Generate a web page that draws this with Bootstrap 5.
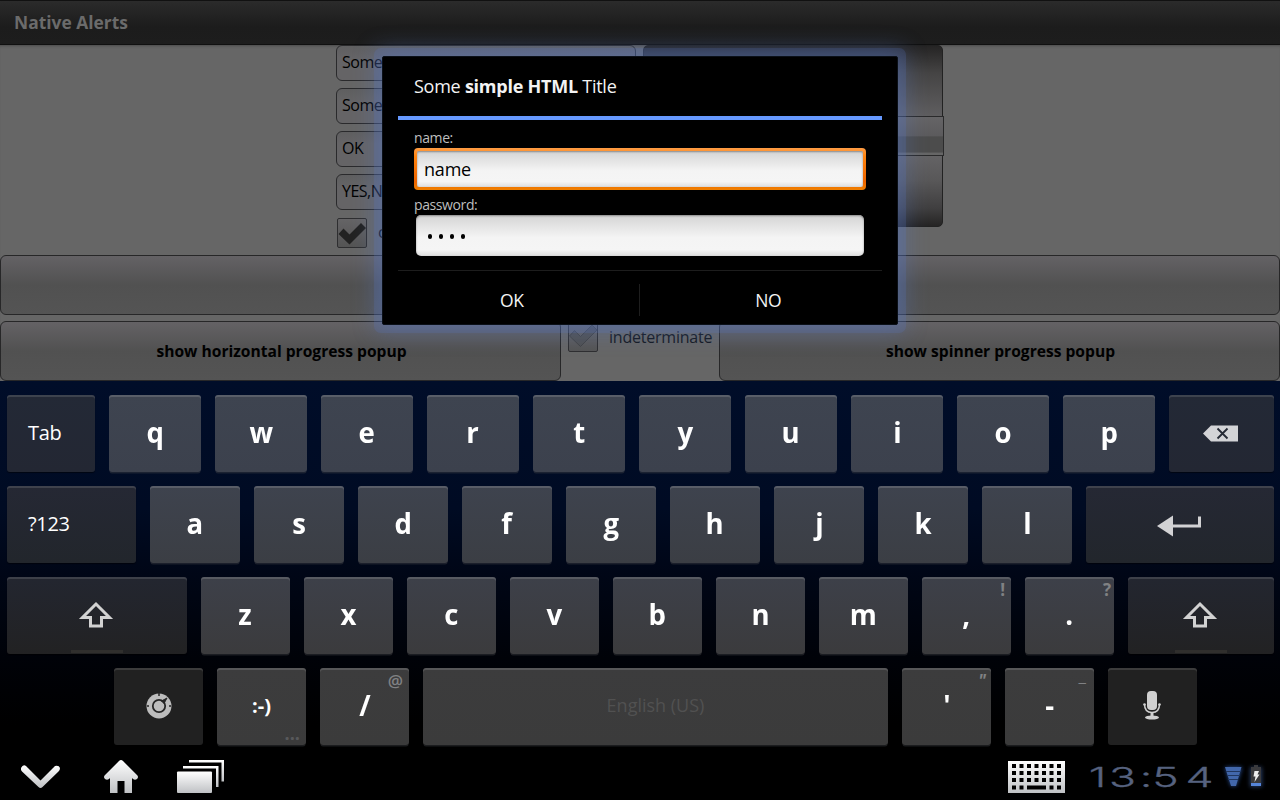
<!DOCTYPE html>
<html lang="en">
<head>
<meta charset="utf-8">
<meta name="viewport" content="width=device-width, initial-scale=1">
<title>Native Alerts</title>
<link rel="stylesheet" href="https://cdn.jsdelivr.net/npm/bootstrap@5.3.0/dist/css/bootstrap.min.css">
<style>
body{width:1280px;height:800px;overflow:hidden;background:#000;font-family:"Open Sans","Noto Sans",sans-serif;font-size:16px;line-height:1.2;color:#000}
svg{display:block;overflow:visible}

/* application behind the dialog */
.titlebar{height:45px;padding:0 14px 1px;background:linear-gradient(#2b2b2b,#1c1c1c 60%,#1d1d1d);border-top:1px solid #111;border-bottom:1px solid #101010;color:#6b6b6b;font-size:17.4px;font-weight:700}
.app-body{height:336px;background:#666;box-shadow:inset 0 3px 3px -2px #4a4a4a}
.form-cols{width:608px;margin-left:336px;gap:7px;height:210px}
.fields{width:300px;gap:7px}
.field{height:36px;border:1.5px solid #2a2a2c;border-radius:6px;padding:0 5px;background:linear-gradient(#5f5f60,#656466 35%,#656466);letter-spacing:-.5px}
.wheel{width:300px;height:182px;border:1px solid #222;border-radius:5px;background:linear-gradient(#252424,#454444 15%,#605f61 40%,#656466 60%,#585758 75%,#403f40 90%,#252424);padding-top:70px}
.wheel-band{height:40px;width:300px;border:1px solid #2a2a2b;background:linear-gradient(#656466 0,#5c5b5d 50%,#4c4c4c 52%,#4c4c4c 93%,#666 94%)}
.tick{width:30px;height:30px;margin-left:1px;border:1px solid #2e2e30;border-radius:2px;background:linear-gradient(#656466,#545454)}
.check-row{padding-top:1px}
.check-row span{padding-left:3px}
.big-btn{height:60px;border:1px solid #272728;border-radius:6px;background:linear-gradient(#646265,#515151 50%,#545454);font-size:15.6px;font-weight:700}
.lower{margin-top:6px}
.half{width:561px;padding-left:2px}
.mid{width:158px;padding:1px 0 0 6px}
.ind{margin-left:11px;margin-top:6px;color:#141820;letter-spacing:-.22px;white-space:nowrap}

/* dialog */
.dialog{left:382px;top:56px;width:516px;height:269px;background:#000;border:1px solid #0b1018;border-radius:2px;box-shadow:0 0 0 8px rgba(88,122,200,.2),0 0 22px 7px rgba(84,118,200,.36);padding:0 15px;color:#f3f3f3}
.dlg-title{height:63px;border-bottom:4px solid #69f;padding-left:16px;font-size:18px;letter-spacing:-.25px}
.dlg-main{height:150px;padding-top:10px}
.cap{font-size:14px;letter-spacing:-.4px;color:#bebebe;line-height:16px}
.edit{border-radius:5px;background:linear-gradient(#d4d4d4,#f4f4f4 55%,#f5f5f5 85%,#ddd);color:#000;font-size:18px;letter-spacing:-.2px;box-shadow:inset 0 1px 2px #888}
.focused{height:42px;width:452px;margin:2px 0 7px;padding:3px;border-radius:4px;background:linear-gradient(#ff9d45,#ff8410 20%,#ec6400 80%,#f08000)}
.focused .edit{border-radius:2px;padding:2px 0 0 7px}
.pass{margin:2px 2px 0;height:41px;padding:2px 0 0 12px;gap:7px}
.dot{width:4px;height:5px;border-radius:2px;background:#000}
.dlg-foot{border-top:1px solid #1d1d1d;height:53px;font-size:17.5px;letter-spacing:-.4px}
.dlg-foot>div{flex:1 1 0;padding-top:6px}
.dlg-foot .lab-l{padding-right:14px}
.dlg-foot .lab-r{padding-left:14px}
.dlg-foot>.sep{flex:0 0 1px;height:32px;margin-top:5px;padding:0;background:#1e1e1e;position:relative;left:-1px}

/* keyboard */
.keyboard{height:374px;padding:14px 6px 0 7px;gap:14px;background:linear-gradient(#000d29,#000b23 34%,#000616 52%,#000208 74%,#000 92%)}
.krow{height:77px;gap:14px}
.key{position:relative;border-radius:3px;color:#fff;font-size:29px;font-weight:700;background:var(--lt);box-shadow:inset 0 2px 0 rgba(255,255,255,.14),0 2px 0 -.5px rgba(60,62,66,.45);flex:0 0 auto;padding-bottom:2px}
.glyph{transform:scaleX(.95)}
.key.fn{background:var(--dk);font-size:20px;font-weight:400;letter-spacing:-.3px;box-shadow:inset 0 2px 0 rgba(255,255,255,.12),0 1px 1px rgba(0,0,0,.5);padding-bottom:1px}
.key.fn svg{margin-right:2px}
.r1{--w:92px;--lt:linear-gradient(#3e4450,#3c414d);--dk:linear-gradient(#232936,#232733)}
.r2{--w:90px;--lt:linear-gradient(#3e434e,#3b3e44);--dk:linear-gradient(#252834,#22262c)}
.r3{--w:89px;--lt:linear-gradient(#3d4049,#3b3b3d);--dk:linear-gradient(#232630,#222223)}
.r4{--w:89px;--lt:linear-gradient(#3c3c3d,#3b3b3b);--dk:#212121;padding-left:107px}
.key.k{width:var(--w)}
.hint{position:absolute;right:6px;top:2px;font-size:17px;line-height:22px;color:#808183;font-weight:700}
.hint-q{right:3px}
.hint-at{font-weight:600}
.hint-dq{font-style:italic;right:5px}
.hint-us{right:8px;top:-3px;font-weight:400}
.shift-glow{position:absolute;bottom:1px;left:50%;transform:translateX(-50%);height:3px;width:52px;background:#302f2d}
.lbl{padding-left:21px}
.smile{font-size:20px}
.more{position:absolute;right:6px;bottom:2px;font-size:18px;color:#58595b;line-height:20px}
.key.space{width:465px;font-size:18px;font-weight:400;color:#515151}
.sysbar{height:45px;background:#000}
</style>
</head>
<body class="m-0 d-flex flex-column position-relative">
<header class="titlebar d-flex align-items-center flex-shrink-0">Native Alerts</header>
<main class="app-body flex-shrink-0">
  <div class="form-cols d-flex">
    <div class="fields d-flex flex-column">
      <div class="field d-flex align-items-center">Some</div>
      <div class="field d-flex align-items-center">Some</div>
      <div class="field d-flex align-items-center">OK</div>
      <div class="field d-flex align-items-center">YES,NO</div>
      <div class="check-row d-flex align-items-center">
        <div class="tick"><svg width="28" height="28" viewBox="0 0 28 28"><path d="M.5 15L5.500 9.500 11.500 15.500 23 4l5 5-16.500 16.500z" fill="#222"/></svg></div>
        <span class="ms-2">cancelable</span>
      </div>
    </div>
    <div class="wheel"><div class="wheel-band"></div></div>
  </div>
  <div class="big-btn"></div>
  <div class="d-flex lower">
    <div class="big-btn half d-flex align-items-center justify-content-center">show horizontal progress popup</div>
    <div class="mid d-flex">
      <div class="tick"><svg width="28" height="28" viewBox="0 0 28 28"><path d="M.5 13L5.500 7.500 11.500 13.500 23 2l5 5-16.500 16.500z" fill="#505153" stroke="#424345"/></svg></div>
      <span class="ind">indeterminate</span>
    </div>
    <div class="big-btn half d-flex align-items-center justify-content-center">show spinner progress popup</div>
  </div>
</main>

<section class="keyboard d-flex flex-column flex-shrink-0" id="kb"></section>

<footer class="sysbar d-flex flex-shrink-0">
<svg width="1280" height="45" viewBox="0 755 1280 45">
  <defs>
    <linearGradient id="sv" x1="0" y1="0" x2="0" y2="1"><stop offset="0" stop-color="#fff"/><stop offset="1" stop-color="#bfc1c4"/></linearGradient>
    <filter id="gl" x="-50%" y="-50%" width="200%" height="200%"><feGaussianBlur stdDeviation="2"/></filter>
  </defs>
  <path d="M21 768q2-4 5-2L40.500 780.500 55 766q4-1 5 2 0 2-1.500 3.500L42.500 787q-2 2-4 0L22 771.500Q20.500 770 21 768z" fill="url(#sv)"/>
  <path d="M121 760q1 0 2 1l14 14q2 2 0 4-2 1.500-4 0l-1-1v15h-7.500v-12h-7v12H110v-15l-1 1q-2 1.500-4 0-2-2 0-4l14-14q1-1 2-1z" fill="url(#sv)"/>
  <g fill="url(#sv)"><rect x="177" y="771.500" width="35" height="21.500" rx="1"/><path d="M183 766h35.500v21H216v-18.500h-33z"/><path d="M189 760h35v21.500h-2.500v-19H189z"/></g>
  <rect x="1008" y="761" width="57" height="32" fill="url(#sv)"/>
  <g fill="none" stroke="#000" stroke-width="4" stroke-dasharray="4 3.500"><path d="M1012 766h49M1012 773h49M1012 780h49"/><path d="M1012 787.500h12M1049.500 787.500h12"/></g>
  <rect x="1027" y="785.500" width="19" height="4" fill="#000"/>
  <g transform="scale(1.62 1)"><text y="787" x="672 684.500 703.500 711.300 731.800" font-family="Inter,'Open Sans',sans-serif" font-weight="300" font-size="27.500" fill="#56627f" stroke="#56627f" stroke-width=".3">13:54</text></g>
  <path d="M1225 767h17l-6 19h-5z" fill="#3b6fd0" opacity=".7" filter="url(#gl)"/>
  <path d="M1225 767h16.500l-5.500 19h-5z" fill="#4267ab"/>
  <path d="M1226 771.500h15M1227 775.500h13M1228 779.500h10" stroke="#20365f"/>
  <rect x="1250" y="767" width="12" height="20" fill="#4468aa" opacity=".55" filter="url(#gl)"/>
  <path d="M1254 765h4v2h3v17h-10v-17h3z" fill="#3a3a3d"/>
  <path d="M1254.500 771h4.500l-1.500 3.500h2l-5 7.500 1-5.500h-2z" fill="#eee"/>
  <rect x="1251" y="783" width="10" height="3" fill="#5584d8"/>
</svg>
</footer>

<div class="dialog position-absolute" role="dialog">
  <div class="dlg-title d-flex align-items-center"><span>Some <b>simple HTML</b> Title</span></div>
  <div class="px-3 dlg-main">
    <div class="cap">name:</div>
    <div class="focused"><div class="edit h-100 d-flex align-items-center">name</div></div>
    <div class="cap">password:</div>
    <div class="edit pass d-flex align-items-center"><i class="dot"></i><i class="dot"></i><i class="dot"></i><i class="dot"></i></div>
  </div>
  <div class="dlg-foot d-flex align-items-center text-center">
    <div class="lab-l">OK</div><div class="sep"></div><div class="lab-r">NO</div>
  </div>
</div>

<script src="https://cdn.jsdelivr.net/npm/bootstrap@5.3.0/dist/js/bootstrap.bundle.min.js"></script>
<script>
const shift='<svg width="34" height="28" viewBox="0 0 34 28"><path d="M17 3L3.500 16.500h8V25h11v-8.500h8z" fill="none" stroke="#d2d2d2" stroke-width="3"/></svg><i class="shift-glow"></i>';
const del='<svg width="35" height="17" viewBox="0 0 35 17"><path d="M0 8.500L8 .5h27v16H8z" fill="#d3d4d7"/><path d="M14.500 3.500l10 10m0-10l-10 10" stroke="#252a35" stroke-width="1.800"/></svg>';
const enter='<svg class="mt-1" width="45" height="22" viewBox="0 0 45 22"><path d="M0 11L16 .5v21z" fill="#d2d2d4"/><path d="M15 11h27.500V1.500" fill="none" stroke="#d2d2d4" stroke-width="3"/></svg>';
const dial='<svg class="me-0" width="26" height="26" viewBox="0 0 26 26"><circle cx="13" cy="13" r="12.500" fill="#bdbdbd"/><circle cx="13" cy="13" r="6.200" fill="none" stroke="#262626" stroke-width="1.800"/><path d="M15.500 8l5.500-3-3 5.500z" fill="#262626" stroke="#262626"/><path d="M13 0v3M1 13h2M23 13h2" stroke="#262626" stroke-width="1.500"/></svg>';
const mic='<svg width="18" height="30" viewBox="0 0 18 30"><rect x="4" y="0" width="10" height="19" rx="4" fill="#d0d0d0"/><path d="M1.500 13q0 8.500 7.500 8.500t7.500-8.500" fill="none" stroke="#d0d0d0" stroke-width="1.500"/><circle cx="1.500" cy="13.500" r="1.300" fill="#d0d0d0"/><circle cx="16.500" cy="13.500" r="1.300" fill="#d0d0d0"/><path d="M9 21v4" stroke="#d0d0d0" stroke-width="3"/><ellipse cx="9" cy="26.500" rx="7" ry="2" fill="#d0d0d0"/></svg>';
const f=(h,w,x='')=>`<div class="key fn d-flex align-items-center ${x||'justify-content-center'}" style="width:${w}px">${h}</div>`;
const k=(c,h='',n='')=>`<div class="key k d-flex align-items-center justify-content-center"><span class="glyph">${c}</span>${h?`<span class="hint ${n}">${h}</span>`:''}</div>`;
const ks=s=>[...s].map(c=>k(c)).join('');
const row=(n,h)=>`<div class="krow r${n} d-flex">${h}</div>`;
document.getElementById('kb').innerHTML=
 row(1,f('<span>Tab</span>',88,'lbl')+ks('qwertyuiop')+f(del,105))+
 row(2,f('<span>?123</span>',129,'lbl')+ks('asdfghjkl')+f(enter,188))+
 row(3,f(shift,180)+ks('zxcvbnm')+k(',','!')+k('.','?','hint-q')+f(shift,146))+
 row(4,f(dial,89)+
  '<div class="key k d-flex align-items-center justify-content-center"><span class="smile">:-)</span><span class="more">...</span></div>'+
  k('/','@','hint-at')+
  '<div class="key space d-flex align-items-center justify-content-center">English (US)</div>'+k("'",'"','hint-dq')+k('-','_','hint-us')+f(mic,89));
</script>
</body>
</html>
